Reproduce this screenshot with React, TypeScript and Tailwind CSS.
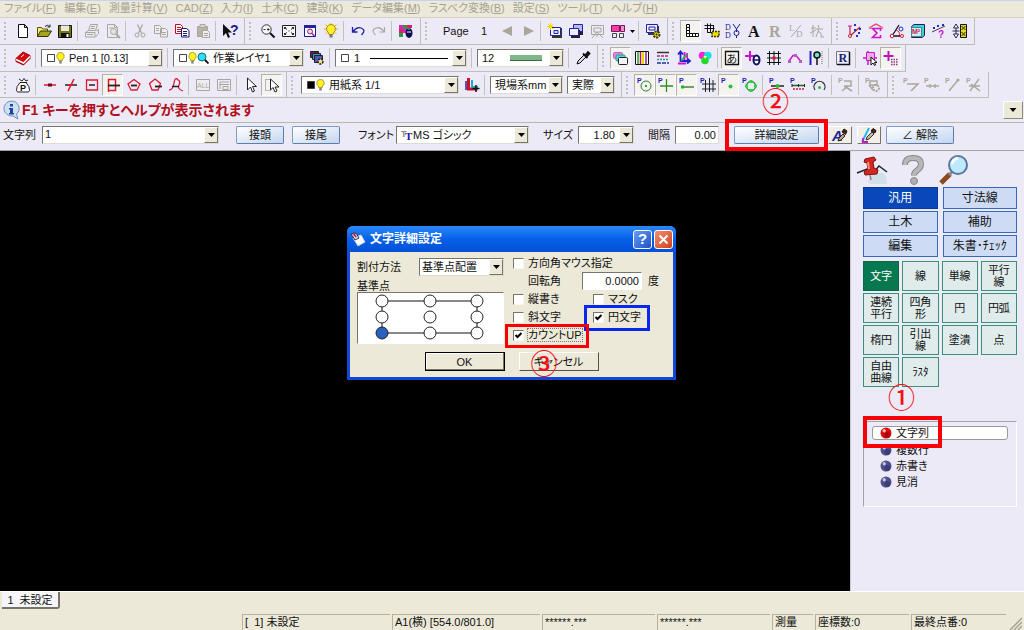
import type { ReactNode } from "react";

const G = "#aaa79a"; // disabled icon colour
const M = "#d010d0";

function PMark({ color = "#1c1cc0" }: { color?: string }) {
  return (
    <text x="0" y="6" fontSize="7" fontWeight="bold" fill={color}>
      P
    </text>
  );
}

// all glyphs are drawn on a 16x16 grid
const icons: Record<string, ReactNode> = {
  new: <path d="M3.5 1.5h6l3 3v10h-9zM9.5 1.5v3h3" fill="#fff" stroke="#111" />,
  open: (
    <>
      <path d="M1.5 13.5v-9h4l1 1.5h5v2" fill="#f4ee70" stroke="#55530a" />
      <path d="M1.5 13.5 4.500 8h11l-3.500 5.500z" fill="#a8a420" stroke="#33320a" />
      <path d="M9 3.500q2.500-2.500 4.500 0M14 1.500v2.500h-2.500" fill="none" stroke="#222" />
    </>
  ),
  save: (
    <>
      <path d="M1.500 2.500h13v12h-13z" fill="#77760e" stroke="#111" />
      <path d="M4 2.500h8v5.500H4z" fill="#e8e8e0" />
      <path d="M4 10h8.500v4.500H4z" fill="#111" />
      <path d="M9.500 11h2v3h-2z" fill="#fff" />
    </>
  ),
  print: (
    <path d="M4.500 7.500 6.500 1.500h7l-2 6M1.500 9.500l3-2h8l2-1v4l-3 3.500h-10zM1.500 9.500h9.500v4M3 11.500h6M7 3.500h4M6.500 5.500h4" fill="none" stroke={G} />
  ),
  preview: (
    <>
      <path d="M2.500 1.500h7l3 3v10h-10zM9.500 1.500v3h3M4.500 5h4" fill="none" stroke={G} />
      <circle cx="8.500" cy="8.500" r="3" fill="#e4e2e0" stroke={G} />
      <path d="m11 11 4 4" stroke={G} strokeWidth="2" />
    </>
  ),
  cut: (
    <>
      <path d="M5.500 1.500 9.500 10M10.500 1.500 6.500 10" stroke={G} fill="none" strokeWidth="1.300" />
      <circle cx="5" cy="12" r="2" fill="none" stroke={G} />
      <circle cx="11" cy="12" r="2" fill="none" stroke={G} />
    </>
  ),
  copy: (
    <path d="M1.500 2.500h5l2 2v6h-7zM7.500 5.500h5l2 2v6.500h-7zM3 5.500h3M3 7.500h3M9 9.500h4M9 11.500h4" fill="#efedf2" stroke={G} />
  ),
  copyRed: (
    <>
      <path d="M1.500 1.500h5l2 2v7h-7zM3 4.500h4M3 6.500h4M3 8.500h4" fill="#fff" stroke="#c01020" />
      <path d="M7.500 5.500h5l2.500 2v6.500h-7.500zM9 8.500h4M9 10.500h4M9 12.500h4" fill="#fff" stroke="#151a70" />
    </>
  ),
  paste: (
    <>
      <path d="M2.500 3.500h10v10h-10z" fill="#b5b2a8" stroke={G} />
      <path d="M5 1.500h5v3H5z" fill="#d8d6d0" stroke={G} />
      <path d="M7.500 7.500h5l2 2v5h-7zM9 10.500h4M9 12.500h4" fill="#efedf2" stroke={G} />
    </>
  ),
  help: (
    <>
      <path d="M1 1v12l3-3 2 5 2-1-2-4.500h4z" fill="#111" />
      <text x="8" y="12" fontSize="14" fontWeight="bold" fill="#1a1a90">?</text>
    </>
  ),
  zoom: (
    <>
      <circle cx="6.500" cy="6.500" r="4.700" fill="#f4f4fa" stroke="#333" />
      <path d="M3.500 6.500h2M7 6.500h2.500M8.200 5.200v2.600" stroke="#333" />
      <path d="m10 10 4.500 4.500" stroke="#111" strokeWidth="2" />
    </>
  ),
  fit: (
    <>
      <path d="M1.500 2.500h13v11h-13z" fill="#f6f6f6" stroke="#222" />
      <path d="m3.500 4.500 2.500 2M12.500 4.500l-2.500 2M3.500 11.500l2.500-2M12.500 11.500l-2.500-2M3.500 6v-1.500H5M11 4.500h1.500V6M3.500 10v1.500H5M11 11.500h1.500V10" fill="none" stroke="#222" />
      <path d="M7.500 7.500h1v1h-1z" fill="#222" />
    </>
  ),
  winZoom: (
    <>
      <path d="M2.500 2.500h11v11h-11z" fill="#fff" stroke="#1c1c80" />
      <path d="M2 2h12v3H2z" fill="#23239a" />
      <circle cx="8" cy="8.500" r="2.500" fill="#f6d0f0" stroke="#902090" />
      <path d="m10 10.500 2.500 2.500" stroke="#902090" strokeWidth="1.500" />
    </>
  ),
  bulb: (
    <>
      <path d="M8 0v2M1 6h2M13 6h2M2.500 1.500 4 3M13.500 1.500 12 3M2.500 11 4 9.500M13.500 11 12 9.500" stroke="#d8b800" />
      <path d="M8 1.500a4.500 4.500 0 0 0-2.800 8l.8 2h4l.8-2A4.500 4.500 0 0 0 8 1.500z" fill="#ffee28" stroke="#a89000" />
      <path d="M6.500 11.500h3v3h-3z" fill="#777" />
    </>
  ),
  undo: <path d="M2.500 4v5h5M3 8.500q4-5 8-3.500t2.500 4.500l-2 2.500" fill="none" stroke="#20209a" strokeWidth="1.300" />,
  redo: <path d="M13.500 4v5h-5M13 8.500q-4-5-8-3.500t-2.500 4.500l2 2.500" fill="none" stroke={G} strokeWidth="1.200" />,
  palette: (
    <>
      <path d="M1 2h4v4H1zM5 6h4v4H5z" fill="#e020d0" />
      <path d="M5 2h4v4H5zM1 10h4v4H1z" fill="#20a030" />
      <path d="M1 6h4v4H1zM9 2h5v3H9z" fill="#e02060" />
      <ellipse cx="11" cy="10" rx="3.500" ry="5" fill="#101050" />
      <path d="M9 9h4" stroke="#fff" />
      <path d="M11 5v2" stroke="#30d0e0" />
    </>
  ),
  prev: <path d="M13 3v10L3 8z" fill={G} />,
  next: <path d="M4 3v10l10-5z" fill={G} />,
  pageNew: (
    <>
      <path d="M5 5h10v10H5z" fill="#333a20" />
      <path d="M3.500 4.500h10v8h-10z" fill="#f4f4f8" stroke="#2222b0" />
      <path d="M7 7.500h4v3H7z" fill="#dde" stroke="#2222b0" />
      <path d="M3.500 0v7M0 3.500h7M1 1l5 5M6 1 1 6" stroke="#f0d800" />
    </>
  ),
  pageCopy: (
    <>
      <path d="M7 3h8v9H7z" fill="#223" />
      <path d="M5.500 1.500h9v7h-9z" fill="#b8b8e8" stroke="#2222a0" />
      <path d="M3 7h9v8H3z" fill="#223" />
      <path d="M1.500 5.500h9v7h-9z" fill="#eef" stroke="#2222a0" />
    </>
  ),
  pageDel: <path d="M2.500 2.500h12v9h-12zM5 5h7v4H5zM8 9l-5 6M8 9l6 6M8 11v3" fill="none" stroke={G} />,
  pageGrid: (
    <>
      <path d="M1.500 2.500h8v6h-8z" fill="#f040a0" stroke="#801060" />
      <path d="M10.500 2.500h4v6h-4z" fill="#f490c8" stroke="#801060" />
      <path d="M2.500 10.500h4v4h-4zM9.500 10.500h4v4h-4z" fill="#eee" stroke="#444" />
    </>
  ),
  pageGear: (
    <>
      <path d="M3 3h11v9H3z" fill="#333a40" />
      <path d="M1.500 1.500h11v8h-11z" fill="#eef" stroke="#2222a0" />
      <path d="M4 4h6v3H4z" fill="none" stroke="#2222a0" />
      <circle cx="11.500" cy="11.500" r="3" fill="#f0e000" stroke="#33320a" strokeDasharray="2 1" strokeWidth="2" />
      <circle cx="11.500" cy="11.500" r="1" fill="#222" />
    </>
  ),
  ruler: (
    <path d="M3.500 1.500h3v9h9v3h-12zM3.500 4.500h3M3.500 7.500h3M3.500 10.500h3v3M9.500 10.500v3M12.500 10.500v3" fill="#fff" stroke="#111" />
  ),
  rulerSet: (
    <>
      <path d="M3.500.5v9h8M6.500.5v9M9.500 2v8M.500 2.500h9M.500 5.500h10M3.500 9.500h6" fill="none" stroke="#111" />
      <path d="M8 8.500h7v5H8z" fill="#f0e000" stroke="#33320a" strokeDasharray="2 1" strokeWidth="1.500" />
    </>
  ),
  ddy: (
    <>
      <text x="0" y="7" fontSize="8" fill="#1c1c90" fontFamily="Liberation Serif">D</text>
      <text x="0" y="15" fontSize="8" fill="#1c1c90" fontFamily="Liberation Serif">D</text>
      <path d="m8 1 3.500 5L15 1M11.500 6v3" fill="none" stroke="#1c1c90" />
      <circle cx="11.500" cy="10" r="2.500" fill="none" stroke="#1c1c90" />
      <path d="M11.500 12.500V15" stroke="#1c1c90" />
    </>
  ),
  bigA: <text x="2" y="14" fontSize="16" fontWeight="bold" fill="#111" fontFamily="Liberation Serif">A</text>,
  bigR: <text x="2" y="14" fontSize="16" fontWeight="bold" fill={G} fontFamily="Liberation Serif">R</text>,
  ld: (
    <>
      <text x="1" y="8" fontSize="9" fill={G} fontFamily="Liberation Serif">L</text>
      <text x="8" y="14" fontSize="9" fill={G} fontFamily="Liberation Serif">D</text>
      <path d="M3 14 13 2" stroke={G} />
    </>
  ),
  walk: <path d="M4 2v12M2 5h5M9 2l1 3M7 6h7M10 6 7 14M9 9q4-1 3 5h3M1 10l6-3" fill="none" stroke={G} />,
  plot: (
    <>
      <path d="M3 3v11M3 13 13 4" stroke="#c02030" fill="none" strokeWidth="1.200" />
      <path d="M1 3h4" stroke={M} />
      <circle cx="3" cy="13" r="1.500" fill="#fff" stroke="#c02030" />
      <path d="M7 1h2v2H7zM11 9h2v2h-2zM9 12h2v2H9zM12 5h2v2h-2zM7 6h2v2H7z" fill="#2030c0" />
    </>
  ),
  sigma: (
    <>
      <path d="m1 5 7-4 7 4" fill="none" stroke="#e04060" strokeWidth="1.200" />
      <circle cx="2" cy="5" r="1.300" fill="#f08090" />
      <circle cx="14" cy="5" r="1.300" fill="#f08090" />
      <path d="M12.500 8V5.500h-8L9 10l-4.500 4.500h8V12" fill="none" stroke={M} strokeWidth="1.600" />
    </>
  ),
  angle: (
    <>
      <path d="M10 2 3 13h11" fill="none" stroke="#111" strokeWidth="1.300" />
      <path d="M7 7q4 1 3.500 6" fill="none" stroke="#e02030" />
      <circle cx="3" cy="13" r="1.800" fill="#fff" stroke="#c02030" />
      <circle cx="13" cy="13" r="1.500" fill="#fff" stroke="#c02030" />
      <circle cx="12" cy="6" r="2" fill="none" stroke="#2030c0" />
    </>
  ),
  area: (
    <>
      <path d="M1.500 3.500 4 1.500h10.500v11l-2.500 2h-10.500z" fill="#40d0d8" stroke="#225" />
      <path d="M1.500 4.500h10v9h-10z" fill="#c8f0f0" stroke="#488" />
      <text x="2" y="11" fontSize="7" fontWeight="bold" fill="#d01060">M²</text>
    </>
  ),
  ptQ: (
    <>
      <path d="M1 9 14 3" stroke="#444" />
      <path d="M2 4h2v2H2zM6 2h2v2H6zM11 1h2v2h-2z" fill="#2030c0" />
      <text x="7" y="15" fontSize="10" fontWeight="bold" fill={M}>?</text>
    </>
  ),
  plusBox: (
    <>
      <path d="M4 1 1.500 5h5zM4 15 1.500 11h5zM4 5v6M.500 8h7" fill="#fff" stroke="#222850" />
      <path d="M8.500 1.500h6v13h-6z" fill="#e8dc20" stroke="#111" />
      <path d="m9.500 3 4 4M13.500 3l-4 4M9.500 9l4 4M13.500 9l-4 4" stroke="#222" />
    </>
  ),
  eraser: (
    <>
      <path d="M1 8.500 8 2l7 3.500v3L8.500 15 1 11.500z" fill="#d80810" stroke="#900" />
      <path d="m1 9.500 7.500 3.500L15 6.500" fill="none" stroke="#fff" strokeWidth="1.500" />
      <path d="m6 7 3-2.500" stroke="#fff" />
    </>
  ),
  layerStack: (
    <>
      <path d="M1.500 1.500h8v6h-8z" fill="#6a1a70" stroke="#222" />
      <path d="M3.500 3.500h8v6h-8z" fill="#28a8a0" stroke="#222" />
      <path d="M5.500 5.500h8v7h-8z" fill="#5058c0" stroke="#222" />
      <circle cx="11.500" cy="11.500" r="2.500" fill="#f0e080" stroke="#222" strokeDasharray="2 1" strokeWidth="1.500" />
    </>
  ),
  dropper: (
    <>
      <path d="m2 14 1-3 6-6 2 2-6 6z" fill="#d8d8e0" stroke="#111" />
      <path d="m8 3.500 4.500 4.500M10 5.500 13 2l1.500 1.500-3 3.500z" fill="#111" stroke="#111" strokeWidth="1.800" />
    </>
  ),
  windows: (
    <>
      <rect x=".5" y="2.500" width="9" height="6" rx="1" fill="#f080e0" stroke="#c060c0" />
      <rect x="3" y="5" width="9" height="6" rx="1" fill="#50d8d0" stroke="#20a0a0" />
      <rect x="5.500" y="7.500" width="9" height="7" rx="1" fill="#f4f4f4" stroke="#222" />
    </>
  ),
  colors: (
    <>
      <path d="M1.500 1.500h13v13h-13z" fill="#fff" stroke="#111" />
      <path d="M4 2v12" stroke="#20a030" strokeWidth="1.500" />
      <path d="M6.500 2v12" stroke="#c01050" strokeWidth="1.500" />
      <path d="M9 2v12" stroke="#e8d800" strokeWidth="2" />
      <path d="M12 2v12" stroke="#901890" strokeWidth="1.500" />
    </>
  ),
  lines: (
    <>
      <path d="M2 2.500h12" stroke="#333" strokeWidth="1.500" />
      <path d="M2 6h12" stroke="#c02080" strokeDasharray="3 1" strokeWidth="1.500" />
      <path d="M2 9.500h12" stroke="#20a090" strokeDasharray="2 1" strokeWidth="1.500" />
      <path d="M2 13h12" stroke="#2030a0" strokeDasharray="4 1" strokeWidth="1.500" />
    </>
  ),
  axes: (
    <>
      <path d="M4.500 2v9h9M2 4.500l2.500-3 2.500 3M11 8.500l3 2.500-3 2.500" fill="none" stroke="#2020d0" strokeWidth="1.800" />
      <path d="M8.500 2v8M11 3v5M2 13.500h8" fill="none" stroke={M} strokeWidth="1.800" />
      <path d="m5 11 6-7" stroke="#20b040" strokeWidth="1.500" />
    </>
  ),
  rgb: (
    <>
      <circle cx="5.500" cy="5.500" r="3.800" fill="#ff20d8" />
      <circle cx="10.800" cy="5.500" r="3.800" fill="#18e0e0" />
      <circle cx="8" cy="10.500" r="3.800" fill="#28d828" />
      <path d="M6.500 6h3.500L8.200 9z" fill="#fff8a0" />
    </>
  ),
  kana: (
    <>
      <path d="M1.500 1.500h13v13h-13z" fill="#f8f8f8" stroke="#111" strokeWidth="1.300" />
      <text x="2.500" y="12.500" fontSize="11" fill="#111">あ</text>
    </>
  ),
  plusTheta: (
    <>
      <path d="M5 1v10M0 6h10" stroke={M} strokeWidth="2" />
      <ellipse cx="11.500" cy="10" rx="3" ry="4.500" fill="#fff" stroke="#101060" strokeWidth="2" />
      <path d="M9 10h5" stroke="#101060" strokeWidth="1.500" />
    </>
  ),
  grid: (
    <>
      <path d="M3.500 1v14M8 1v14M12.500 1v14M1 3.500h14M1 8h14M1 12.500h14" stroke="#111" />
      <path d="M6.500 6.500h3v3h-3z" fill="#e01020" />
    </>
  ),
  curve: (
    <>
      <path d="M2 11 6 5.500h3l5 6" fill="none" stroke={M} strokeWidth="1.500" />
      <path d="M1 10h3v3H1zM12 10h3v3h-3zM7 4h3v3H7z" fill="#b060c0" />
    </>
  ),
  pin: (
    <>
      <path d="M2.500 1v14" stroke="#2020c0" strokeWidth="2" />
      <path d="M9 6v9" stroke="#111" strokeWidth="1.500" />
      <circle cx="9" cy="5" r="3" fill="#70e0d0" stroke="#111" strokeWidth="1.500" />
      <path d="M14 1v14" stroke="#777" strokeDasharray="1 1" />
    </>
  ),
  boxR: (
    <>
      <path d="M1.500 1.500h13v13h-13z" fill="#eef" stroke="#777" />
      <path d="M14.500 2v12.500H2" stroke="#111" strokeWidth="1.500" fill="none" />
      <text x="3.500" y="12" fontSize="12" fontWeight="bold" fill="#1a2070" fontFamily="Liberation Serif">R</text>
    </>
  ),
  crossSel: (
    <>
      <path d="M6 1v14M1 8h14" stroke={M} strokeWidth="1.500" />
      <path d="M4.500 2.500h8v8h-8z" fill="#f0a8e8" stroke={M} />
      <path d="M9 7v8l2-2 1.500 2.500 1-.5-1-2.500h2.500z" fill="#fff" stroke="#111" />
    </>
  ),
  crossDots: (
    <>
      <path d="M5.500 1v10M.500 6h10" stroke="#b818b8" strokeWidth="2" />
      <path d="M8 9.500h7M8 12h7M8 14.500h7" stroke="#903890" strokeDasharray="1.500 1" strokeWidth="1.300" />
    </>
  ),
  bagP: (
    <>
      <path d="M5 5.500q-4 4-3.500 8l1 1.500h11l1-1.500q.5-4-3.500-8zM4 2l3 2 2-2.500L11 4l2-1M5 5.500h7" fill="#fff" stroke="#222" />
      <text x="5" y="13.500" fontSize="9" fontWeight="bold" fill="#111">P</text>
    </>
  ),
  snapDot: (
    <>
      <path d="M2 8h12" stroke="#e01830" strokeWidth="1.500" />
      <path d="M6 8h4" stroke="#700818" strokeWidth="3" />
    </>
  ),
  snapCross: (
    <>
      <path d="M5 14 11 2" stroke="#e01830" strokeWidth="1.500" />
      <path d="M2 8h12" stroke="#222" strokeWidth="1.500" />
      <path d="M5 8h5" stroke="#e01830" strokeWidth="2" />
    </>
  ),
  snapBox: (
    <>
      <path d="M2.500 3h11v10h-11z" fill="none" stroke="#e01830" strokeWidth="1.300" />
      <path d="M5 8h6" stroke="#222" strokeWidth="1.500" />
    </>
  ),
  snapFlag: (
    <>
      <path d="M3.500 15V2.500h7v11h-7" fill="none" stroke="#e01830" strokeWidth="1.500" />
      <path d="M3 8.500h12" stroke="#222" strokeWidth="1.800" />
    </>
  ),
  snapPoly: (
    <>
      <path d="m8 2.500 6 4.500-3 6H5L2 7z" fill="none" stroke="#e01830" strokeWidth="1.300" />
      <path d="M5 8.500h6" stroke="#222" strokeWidth="1.800" />
    </>
  ),
  snapHouse: (
    <>
      <path d="m8 2 5.500 4.500-2.500 6.500H5L2.500 6.500z" fill="none" stroke="#e01830" strokeWidth="1.300" />
      <path d="M8 9.500h7" stroke="#222" strokeWidth="1.800" />
    </>
  ),
  snapCurve: (
    <>
      <path d="M1 13Q5 13 6 6t4-3q3 1 1 5t4 6" fill="none" stroke="#e01830" strokeWidth="1.300" />
      <path d="M4 9.500h7" stroke="#222" strokeWidth="1.500" />
    </>
  ),
  all: (
    <>
      <path d="M1.500 2.500h13v11h-13z" fill="#efedf2" stroke={G} />
      <text x="2" y="11" fontSize="7" fill={G}>ALL</text>
    </>
  ),
  allSub: <path d="M1.500 2.500h13v11h-13zM4 5h9M4 7.500h9M4 5v7M7 9.500h5v3H7z" fill="none" stroke={G} />,
  arrow: <path d="M4.500 1v12l3-3 2 5 2-1-2-4.500h4z" fill="#fff" stroke="#222" />,
  arrowSel: (
    <>
      <path d="M1.500 2.500h5v11h-5z" fill="none" stroke="#777" strokeDasharray="1 1" />
      <path d="M6.500 2v11l2.500-2.500 2 4.500 2-1-2-4h4z" fill="#fff" stroke="#222" />
    </>
  ),
  axesPlus: (
    <>
      <path d="M4.500 1v11h9" fill="none" stroke="#d01020" strokeWidth="3" />
      <path d="M8 3v7h6" fill="none" stroke="#18b0c8" strokeWidth="2" />
      <path d="M2 4v9" stroke="#2020a0" strokeWidth="1.500" />
      <path d="M12 8v7M8.500 11.500h7" stroke="#111" strokeWidth="1.500" />
    </>
  ),
  pCircle: (
    <>
      <PMark />
      <circle cx="9" cy="9" r="5" fill="none" stroke="#3a7a3a" />
      <path d="M8 8h2v2H8z" fill="#10c020" />
    </>
  ),
  pCross: (
    <>
      <PMark />
      <path d="M8.500 2v13M2 9h13" stroke="#2a902a" strokeWidth="1.300" />
    </>
  ),
  pLine: (
    <>
      <PMark />
      <path d="M2 10h13" stroke="#2a702a" strokeWidth="1.300" />
      <path d="M2 8.500h3v3H2z" fill="#10c020" />
    </>
  ),
  pGrid: (
    <>
      <path d="M5.500 3v12M9.500 1v14M13 3v12M2 7h14M2 12h14" stroke="#222" />
      <PMark />
    </>
  ),
  pDot: (
    <>
      <PMark />
      <circle cx="9.500" cy="9.500" r="2" fill="#28c030" />
    </>
  ),
  pRing: (
    <>
      <PMark />
      <circle cx="9" cy="9" r="4.500" fill="none" stroke="#2a902a" strokeWidth="1.300" />
      <path d="M7.500 3h3v3h-3zM7.500 12h3v3h-3zM3 7.500h3v3H3zM12 7.500h3v3h-3z" fill="#28d838" />
    </>
  ),
  pMid: (
    <>
      <PMark />
      <path d="M2 9h13" stroke="#222" strokeWidth="1.500" />
      <circle cx="8.500" cy="9" r="2" fill="#20c030" />
    </>
  ),
  pDiv: (
    <>
      <PMark />
      <path d="M2 8.500h13" stroke="#2a602a" strokeWidth="1.500" />
      <path d="M3 12h12" stroke="#c02030" strokeDasharray="2 1" strokeWidth="1.500" />
      <path d="M2 7v3M8.500 7v3M14.500 7v3" stroke="#222" />
    </>
  ),
  pArc: (
    <>
      <PMark />
      <path d="M4 13a5.500 5.500 0 1 1 9 0" fill="none" stroke="#333" strokeWidth="1.300" />
      <circle cx="8.500" cy="10.500" r="1.500" fill="#20c030" />
    </>
  ),
  pGrayR: (
    <>
      <PMark color={G} />
      <path d="M6 4h7v5H6M6 9l8 5M10 9l-6 5" fill="none" stroke={G} strokeWidth="1.500" />
    </>
  ),
  pGrayGear: (
    <>
      <PMark color={G} />
      <path d="M5 4h7v4H5zM4 8l4 5" fill="none" stroke={G} strokeWidth="1.500" />
      <circle cx="11" cy="11" r="3" fill="none" stroke={G} strokeDasharray="2 1" strokeWidth="2" />
    </>
  ),
  pGrayA: (
    <>
      <PMark color={G} />
      <path d="M4 7h11L8 14" fill="none" stroke={G} strokeWidth="1.500" />
    </>
  ),
  pGrayB: (
    <>
      <PMark color={G} />
      <path d="M2 9h13M6 7v4M11 7v4" fill="none" stroke={G} strokeWidth="1.300" />
    </>
  ),
  pGrayC: (
    <>
      <PMark color={G} />
      <path d="M4 14 13 3" stroke={G} strokeWidth="1.500" />
      <circle cx="13" cy="3" r="1.500" fill={G} />
    </>
  ),
  pGrayD: (
    <>
      <PMark color={G} />
      <path d="m4 14 9-12M5 7l9 7M3 9h11" stroke={G} strokeWidth="1.400" />
    </>
  ),
  fontPick: (
    <>
      <text x="0" y="14" fontSize="15" fontWeight="bold" fontStyle="italic" fill="#1a2a98">A</text>
      <path d="m6 14 1-3 4-4 2 2-4 4z" fill="#c8a080" stroke="#222" />
      <path d="m10 5 2-3 3 2-1.500 3.500z" fill="#422" stroke="#211" />
    </>
  ),
  linePick: (
    <>
      <path d="M8 1 1 15" stroke="#18b8f0" strokeWidth="1.800" />
      <path d="M2 11v4h5" fill="none" stroke={M} strokeWidth="1.800" />
      <path d="m5 13 1-3 5-5 2 2-5 5z" fill="#c8b8a8" stroke="#333" />
      <path d="m10 4 2-2.500 3 2L14 6z" fill="#422" stroke="#211" />
    </>
  ),
};

const SEP = "|";

function Icon({ name, className = "size-4" }: { name: string; className?: string }) {
  return (
    <svg viewBox="0 0 16 16" className={`${className} overflow-visible`} aria-hidden="true">
      {icons[name]}
    </svg>
  );
}

function Sep() {
  return <span className="ml-0.5 mr-[3px] h-5 w-px shrink-0 bg-[#c4c1b8]" />;
}

/* names ending with "*" are drawn pressed */
function Tools({ items }: { items: string[] }) {
  return (
    <>
      {items.map((item, i) => {
        if (item === SEP) return <Sep key={i} />;
        const pressed = item.endsWith("*");
        const name = pressed ? item.slice(0, -1) : item;
        return (
          <button
            key={i}
            type="button"
            aria-label={name}
            aria-pressed={pressed}
            className={
              pressed
                ? "flex h-[22px] w-[21px] shrink-0 items-center justify-center border border-t-[#b5b2a4] border-l-[#b5b2a4] border-r-white border-b-white bg-[#f5f3ef]"
                : "flex h-[22px] w-[21px] shrink-0 items-center justify-center"
            }
          >
            <Icon name={name} />
          </button>
        );
      })}
    </>
  );
}

function Group({ children }: { children: ReactNode }) {
  return (
    <div className="flex h-full shrink-0 items-center border-r border-b border-[#c0bdb4] pr-1">
      <span className="mx-1 h-[18px] w-1 shrink-0 border-l-2 border-dotted border-[#c4c1bc]" />
      {children}
    </div>
  );
}

function Arrow() {
  return (
    <span className="pointer-events-none flex w-[14px] shrink-0 items-center justify-center border border-t-white border-l-white border-r-[#77746a] border-b-[#77746a] bg-[#ece9d8]">
      <svg viewBox="0 0 7 4" className="h-1 w-[7px]" aria-hidden="true">
        <path d="M0 0h7L3.500 4z" fill="#000" />
      </svg>
    </span>
  );
}

function Combo({
  label,
  value,
  width,
  before,
  after,
  selectClass = "flex-1",
}: {
  label: string;
  value: string;
  width: string;
  before?: ReactNode;
  after?: ReactNode;
  selectClass?: string;
}) {
  return (
    <div
      className={`${width} mx-0.5 flex h-[18px] shrink-0 border border-t-[#77746a] border-l-[#77746a] border-r-[#dedbd0] border-b-[#dedbd0] bg-white pl-1`}
    >
      {before && <span className="flex shrink-0 items-center pr-1">{before}</span>}
      <select aria-label={label} className={`${selectClass} min-w-0 appearance-none bg-transparent outline-none`}>
        <option>{value}</option>
      </select>
      {after && <span className="flex flex-1 items-center justify-center">{after}</span>}
      <Arrow />
    </div>
  );
}

function Swatch({ fill = "#fff" }: { fill?: string }) {
  return (
    <svg viewBox="0 0 10 10" className="size-[10px]" aria-hidden="true">
      <path d="M1.500 1.500h7v7h-7z" fill={fill} stroke="#444" />
    </svg>
  );
}

function Bulb() {
  return (
    <svg viewBox="0 0 10 14" className="h-3 w-[9px]" aria-hidden="true">
      <path d="M5 .5a4.300 4.300 0 0 0-2.500 7.800L3 10h4l.5-1.700A4.300 4.300 0 0 0 5 .5z" fill="#fff020" stroke="#a09010" />
      <path d="M3.500 10.500h3v3h-3z" fill="#888" />
    </svg>
  );
}

function Loupe() {
  return (
    <svg viewBox="0 0 12 12" className="size-3" aria-hidden="true">
      <circle cx="5" cy="5" r="4" fill="#30e0f0" stroke="#107080" />
      <path d="m8 8 3.500 3.500" stroke="#111" strokeWidth="1.800" />
    </svg>
  );
}

const menus = [
  ["ファイル", "F"],
  ["編集", "E"],
  ["測量計算", "V"],
  ["CAD", "Z"],
  ["入力", "I"],
  ["土木", "C"],
  ["建設", "K"],
  ["データ編集", "M"],
  ["ラスベク変換", "B"],
  ["設定", "S"],
  ["ツール", "T"],
  ["ヘルプ", "H"],
];

function MenuBar() {
  return (
    <nav className="flex h-[18px] shrink-0 items-center gap-2 border-t border-b border-t-[#c3d4f0] border-b-[#d5d2c4] bg-[#ece9d8] pl-1 text-[#a5a294]">
      {menus.map(([name, key]) => (
        <button key={key} type="button" className="shrink-0 pb-0.5">
          {name}(<u>{key}</u>)
        </button>
      ))}
    </nav>
  );
}

function Toolbars() {
  return (
    <div className="shrink-0">
      <div className="flex h-[27px]">
        <Group>
          <Tools items={["new", "open", "save", SEP, "print", "preview", SEP, "cut", "copy", "copyRed", "paste", SEP, "help"]} />
        </Group>
        <Group>
          <Tools items={["zoom", "fit", "winZoom", "bulb", SEP, "undo", "redo", SEP, "palette"]} />
        </Group>
        <Group>
          <span className="w-[63px] shrink-0 pl-2.5 whitespace-pre">Page{"    "}1</span>
          <Tools items={["prev", "next", SEP, "pageNew", "pageCopy", "pageDel", "pageGrid"]} />
          <button type="button" aria-label="page list" className="flex w-2 justify-center">
            <svg viewBox="0 0 5 3" className="h-[3px] w-[5px]" aria-hidden="true">
              <path d="M0 0h5L2.500 3z" />
            </svg>
          </button>
          <Tools items={[SEP, "pageGear"]} />
        </Group>
        <Group>
          <Tools items={["ruler*", "rulerSet", "ddy", "bigA", "bigR", "ld", "walk"]} />
        </Group>
        <Group>
          <Tools items={["plot", "sigma", "angle", "area", "ptQ", "plusBox"]} />
        </Group>
      </div>

      <div className="flex h-[27px]">
        <Group>
          <Tools items={["eraser", SEP]} />
          <Combo label="ペン" value="Pen 1   [0.13]" width="w-[122px]" before={<><Swatch /><Bulb /></>} />
          <Sep />
          <Combo label="レイヤ" value="作業レイヤ1" width="w-[131px]" before={<><Swatch /><Bulb /><Loupe /></>} />
          <Tools items={["layerStack", SEP]} />
          <Combo
            label="線種"
            value="1"
            width="w-[132px]"
            before={<Swatch />}
            selectClass="w-3"
            after={<span className="h-px w-[78px] bg-black" />}
          />
          <Sep />
          <Combo
            label="線幅"
            value="12"
            width="w-[87px]"
            selectClass="w-5"
            after={<span className="h-[6px] w-8 border-b border-[#3c6b44] bg-[#7fb888]" />}
          />
          <Tools items={[SEP, "dropper"]} />
        </Group>
        <Group>
          <Tools items={["windows*", "colors", "lines", "axes", "rgb", SEP, "kana*", "plusTheta", "grid", "curve", "pin", SEP, "boxR", SEP, "crossSel", "crossDots*"]} />
        </Group>
      </div>

      <div className="flex h-[26px]">
        <Group>
          <Tools items={["bagP", SEP, "snapDot", "snapCross", "snapBox", "snapFlag*", "snapPoly", "snapHouse", "snapCurve", SEP, "all", "allSub", SEP, "arrow", "arrowSel*"]} />
        </Group>
        <Group>
          <Combo label="用紙" value="用紙系 1/1" width="w-[158px]" before={<><Swatch fill="#000" /><Bulb /></>} />
          <Tools items={["axesPlus", SEP]} />
          <Combo label="座標系" value="現場系mm" width="w-[73px]" />
          <Combo label="表示" value="実際" width="w-[48px]" />
        </Group>
        <Group>
          <Tools items={["pCircle*", "pCross*", "pLine*", "pGrid", "pDot*", "pRing", SEP, "pMid", "pDiv", "pArc", SEP, "pGrayR", SEP, "pGrayGear"]} />
        </Group>
        <Group>
          <Tools items={["pGrayA", "pGrayB", "pGrayC", "pGrayD"]} />
        </Group>
      </div>
    </div>
  );
}

function MessageBar() {
  return (
    <div className="flex h-6 shrink-0 items-center pl-0.5">
      <svg viewBox="0 0 20 20" className="size-5 shrink-0" aria-hidden="true">
        <path d="M9 1a8 7.500 0 1 0 2 15l5 3-1.500-5A8 7.500 0 0 0 9 1z" fill="#cfe0f4" stroke="#7090b8" />
        <path d="M8 4h3v2.500H8zM7 8h4v5h1v1.500H7V13h1V9.500H7z" fill="#1848a0" />
      </svg>
      <p className="text-[14px] font-bold text-[#b01020]">F1 キーを押すとヘルプが表示されます</p>
      <button
        type="button"
        aria-label="履歴"
        className="mr-px ml-auto flex h-[18px] w-5 items-center justify-center border border-t-white border-l-white border-r-[#8d8a7d] border-b-[#8d8a7d] bg-[#ece9d8]"
      >
        <svg viewBox="0 0 7 4" className="h-1 w-2" aria-hidden="true">
          <path d="M0 0h7L3.500 4z" />
        </svg>
      </button>
    </div>
  );
}

function SoftButton({ children, width }: { children: ReactNode; width: string }) {
  return (
    <button
      type="button"
      className={`${width} h-[18px] shrink-0 rounded-[2px] border border-[#7f9bc4] border-r-[#5f7ba8] border-b-[#5f7ba8] bg-linear-to-br from-white to-[#c3d6f0]`}
    >
      {children}
    </button>
  );
}

function CircleMark({ children, className }: { children: string; className: string }) {
  return (
    <span className={`${className} pointer-events-none absolute z-20 text-[27px] leading-[27px] font-medium text-[#f01018]`}>
      {children}
    </span>
  );
}

function PropertyBar() {
  return (
    <div className="flex h-7 shrink-0 items-center border-t border-[#b9b6ae] pb-[3px] pl-[3px]">
      <label htmlFor="text-value" className="w-[39px] shrink-0">
        文字列
      </label>
      <div className="flex h-[18px] w-[177px] shrink-0 border border-t-[#77746a] border-l-[#77746a] border-r-[#dedbd0] border-b-[#dedbd0] bg-white">
        <input id="text-value" defaultValue="1" className="min-w-0 flex-1 pb-0.5 pl-0.5 outline-none" />
        <Arrow />
      </div>
      <div className="ml-[17px] flex shrink-0 gap-2">
        <SoftButton width="w-12">接頭</SoftButton>
        <SoftButton width="w-12">接尾</SoftButton>
      </div>
      <span className="ml-[18px] w-9 shrink-0">フォント</span>
      <Combo
        label="フォント"
        value="MS ゴシック"
        width="w-[133px]"
        before={
          <svg viewBox="0 0 12 12" className="-mr-1 size-3" aria-hidden="true">
            <text x="0" y="8" fontSize="9" fontWeight="bold" fill="#888">T</text>
            <text x="4" y="11" fontSize="11" fontWeight="bold" fill="#1c1c90" fontFamily="Liberation Serif">T</text>
          </svg>
        }
      />
      <span className="ml-3 w-[33px] shrink-0">サイズ</span>
      <Combo label="サイズ" value="1.80" width="w-[56px]" selectClass="flex-1 text-right pr-1" />
      <label htmlFor="spacing" className="ml-3 w-[27px] shrink-0">
        間隔
      </label>
      <input
        id="spacing"
        defaultValue="0.00"
        className="h-[18px] w-11 shrink-0 border border-t-[#77746a] border-l-[#77746a] border-r-[#dedbd0] border-b-[#dedbd0] bg-white pr-0.5 text-right outline-none"
      />
      <div className="relative ml-[15px] flex shrink-0">
        <SoftButton width="w-[85px]">詳細設定</SoftButton>
        <span className="pointer-events-none absolute -inset-x-[9px] -inset-y-[7px] z-10 border-4 border-[#f80008]" />
        <CircleMark className="-top-9 left-7">②</CircleMark>
      </div>
      <div className="ml-[9px] flex shrink-0 gap-[5px]">
        {["fontPick", "linePick"].map((name) => (
          <button
            key={name}
            type="button"
            aria-label={name}
            className="flex h-[18px] w-6 items-center justify-center border border-t-white border-l-white border-r-[#77746a] border-b-[#77746a] bg-[#f0eee6]"
          >
            <Icon name={name} />
          </button>
        ))}
        <SoftButton width="w-[68px]">∠ 解除</SoftButton>
      </div>
    </div>
  );
}

function Check({
  label,
  checked = false,
  focused = false,
}: {
  label: string;
  checked?: boolean;
  focused?: boolean;
}) {
  return (
    <label className="relative flex w-fit items-center gap-1">
      <input
        type="checkbox"
        defaultChecked={checked}
        className="peer size-[11px] shrink-0 appearance-none border border-t-[#77746a] border-l-[#77746a] border-r-[#f8f6ee] border-b-[#f8f6ee] bg-white"
      />
      <svg viewBox="0 0 11 11" className="pointer-events-none absolute left-0 hidden size-[11px] peer-checked:block" aria-hidden="true">
        <path d="m2.500 5 2 2 4-4" fill="none" stroke="#000" strokeWidth="2" />
      </svg>
      <span className={focused ? "leading-3 outline-1 outline-dotted outline-[#777]" : ""}>{label}</span>
    </label>
  );
}

function AnchorPicker() {
  const xs = [24, 72, 119];
  const ys = [8, 24, 40];
  return (
    <svg viewBox="0 0 145 50" className="h-[50px] w-[145px]" aria-label="基準点">
      <path d="M24 8h95M24 40h95M24 8v32M119 8v32" stroke="#111" fill="none" />
      {ys.map((y, r) =>
        xs.map((x, c) => (
          <circle key={`${r}${c}`} cx={x} cy={y} r="6" fill={r === 2 && c === 0 ? "#2860c0" : "#fff"} stroke="#222" />
        )),
      )}
    </svg>
  );
}

function Dialog() {
  return (
    <section
      aria-label="文字詳細設定"
      className="absolute top-[75px] left-[347px] w-[329px] rounded-t-md border-[3px] border-t-0 border-[#1248d8] bg-[#ece9d8]"
    >
      <header className="-mx-[3px] flex h-[26px] items-center rounded-t-md bg-linear-to-b from-[#2a88f8] via-[#0560e8] to-[#0550d8] px-[3px] text-white">
        <svg viewBox="0 0 16 16" className="size-4" aria-hidden="true">
          <path d="m3 7 8-3 4 7-7 4z" fill="#fff" stroke="#ccd" />
          <path d="m1 3 5-1 3 5-4 2z" fill="#d8d0e8" stroke="#335" />
          <path d="m3 2 3 4" stroke="#c02040" strokeWidth="1.500" />
        </svg>
        <h2 className="ml-1 flex-1 text-[12px] font-bold">文字詳細設定</h2>
        <button
          type="button"
          aria-label="ヘルプ"
          className="flex size-[19px] items-center justify-center rounded-[3px] border border-white bg-linear-to-br from-[#6a9cf4] to-[#1c50c8] text-[15px] font-bold"
        >
          ?
        </button>
        <button
          type="button"
          aria-label="閉じる"
          className="ml-0.5 flex size-[19px] items-center justify-center rounded-[3px] border border-white bg-linear-to-br from-[#f09070] to-[#d03c14]"
        >
          <svg viewBox="0 0 11 11" className="size-[11px]" aria-hidden="true">
            <path d="m1.500 1.500 8 8M9.500 1.500l-8 8" stroke="#fff" strokeWidth="2" />
          </svg>
        </button>
      </header>

      <div className="flex gap-[9px] pt-0.5 pl-[7px]">
        <div className="w-[147px] shrink-0">
          <div className="flex h-[26px] items-center">
            <span className="w-[60px] shrink-0">割付方法</span>
            <Combo label="割付方法" value="基準点配置" width="w-[85px]" selectClass="flex-1 -ml-0.5" />
          </div>
          <p className="h-3 leading-3">基準点</p>
          <div className="h-[52px] border border-t-[#77746a] border-l-[#77746a] border-r-white border-b-white bg-white">
            <AnchorPicker />
          </div>
        </div>

        <div className="grid flex-1 auto-rows-[18px] grid-cols-[80px_1fr] items-center">
          <div className="col-span-2">
            <Check label="方向角マウス指定" />
          </div>
          <label htmlFor="rotation" className="col-span-2 flex items-center pl-[15px]">
            <span className="w-[54px]">回転角</span>
            <input
              id="rotation"
              defaultValue="0.0000"
              className="h-[18px] w-[60px] border border-t-[#77746a] border-l-[#77746a] border-r-white border-b-white bg-white pr-0.5 text-right outline-none"
            />
            <span className="pl-1.5">度</span>
          </label>
          <Check label="縦書き" />
          <Check label="マスク" />
          <Check label="斜文字" />
          <div className="relative">
            <Check label="円文字" checked />
            <span className="pointer-events-none absolute -top-1 -left-[9px] h-[26px] w-[66px] border-[3px] border-[#0828f0]" />
          </div>
          <div className="relative">
            <Check label="カウントUP" checked focused />
            <span className="pointer-events-none absolute -top-[5px] -left-2 h-6 w-[84px] border-[3px] border-[#f80008]" />
          </div>
        </div>
      </div>

      <div className="flex justify-center gap-[14px] pt-2 pb-[6px]">
        <button
          type="button"
          className="h-[19px] w-20 border border-black bg-[#ece9d8] shadow-[inset_-1px_-1px_0_#77746a,inset_1px_1px_0_#fff]"
        >
          OK
        </button>
        <div className="relative flex">
          <button
            type="button"
            className="h-[19px] w-20 border border-t-white border-l-white border-r-[#55524a] border-b-[#55524a] bg-[#ece9d8]"
          >
            キャンセル
          </button>
          <CircleMark className="top-0 left-3">③</CircleMark>
        </div>
      </div>
    </section>
  );
}

const categories = ["汎用", "寸法線", "土木", "補助", "編集", "朱書･ﾁｪｯｸ"];
const shapes = ["文字", "線", "単線", "平行\n線", "連続\n平行", "四角\n形", "円", "円弧", "楕円", "引出\n線", "塗潰", "点", "自由\n曲線", "ﾗｽﾀ"];
const modes = ["文字列", "複数行", "赤書き", "見消"];

function Ball({ red }: { red: boolean }) {
  return (
    <svg viewBox="0 0 12 12" className="size-3" aria-hidden="true">
      <circle cx="6" cy="6" r="5.500" fill={red ? "#d80c10" : "#50508c"} />
      <circle cx="7.500" cy="8" r="3" fill={red ? "#b00008" : "#3c3c78"} />
      <circle cx="4.200" cy="3.800" r="1.700" fill={red ? "#ffb8a8" : "#c4c4e4"} />
    </svg>
  );
}

function SidePanel() {
  return (
    <aside className="w-[174px] shrink-0 border-l border-[#c9c6cc] pr-[7px] pl-3">
      <div className="flex h-9 items-center gap-[9px] pt-0.5">
        <svg viewBox="0 0 32 32" className="-ml-[7px] size-8" aria-hidden="true">
          <path d="M12 28q2-9 9-8 10-5 10 10H15z" fill="#cfe0e8" />
          <path d="M1 19 11 15l6 4 6-7 8 6" fill="none" stroke="#222" strokeWidth="1.500" />
          <path d="m9 5 9-2 2 3-3 2 1 6 4 2-1 4-12 1-1-3 4-3-1-6-3-1z" fill="#d02820" stroke="#801010" />
          <path d="m12 8 1 7" stroke="#ff9080" strokeWidth="2" />
          <path d="m14 21 1 5" stroke="#888" strokeWidth="1.500" />
        </svg>
        <svg viewBox="0 0 32 32" className="size-8" aria-hidden="true">
          <path d="M8 11q0-7 8-7t8 6q0 4-4 6.500-3 2-3 5" fill="none" stroke="#888" strokeWidth="6" />
          <path d="M8 11q0-7 8-7t8 6q0 4-4 6.500-3 2-3 5" fill="none" stroke="#b8b8b8" strokeWidth="4" />
          <circle cx="17" cy="27" r="3.500" fill="#b0b0b0" stroke="#888" />
        </svg>
        <svg viewBox="0 0 32 32" className="size-8" aria-hidden="true">
          <path d="m3 29 9-9" stroke="#8a4a20" strokeWidth="5" />
          <path d="m11 21 4-4" stroke="#889" strokeWidth="3" />
          <circle cx="20" cy="11" r="9" fill="#c0e8fc" stroke="#58789c" strokeWidth="2" />
          <path d="M14 10q1-5 6-6" fill="none" stroke="#fff" strokeWidth="2.500" />
        </svg>
      </div>

      <div className="grid auto-rows-[22px] grid-cols-2 gap-x-[5px] gap-y-0.5 text-[12px]">
        {categories.map((name, i) => (
          <button
            key={name}
            type="button"
            className={i === 0 ? "border border-[#0838a0] bg-[#0848b8] text-white" : "border border-[#3868b8] bg-[#cddcf4]"}
          >
            {name}
          </button>
        ))}
      </div>

      <div className="mt-1 grid auto-rows-[30px] grid-cols-4 gap-x-[3px] gap-y-0.5">
        {shapes.map((name, i) => (
          <button
            key={name}
            type="button"
            className={
              i === 0
                ? "border border-[#086848] bg-[#087850] leading-3 whitespace-pre-line text-white"
                : "border border-[#3c9078] bg-[#e0ecec] leading-3 whitespace-pre-line"
            }
          >
            {name}
          </button>
        ))}
      </div>

      <div className="relative mt-[34px] h-[86px] border-t border-l border-[#a5a2a8] border-r border-r-white border-b border-b-white pt-1 pl-2">
        {modes.map((name, i) => (
          <label
            key={name}
            className={
              i === 0
                ? "mr-2 mb-0.5 flex h-[14px] items-center gap-1 rounded-[3px] border border-[#999] bg-white pl-[7px]"
                : "flex h-4 items-center gap-1 pl-2"
            }
          >
            <input type="radio" name="mode" defaultChecked={i === 0} className="sr-only" />
            <Ball red={i === 0} />
            {name}
          </label>
        ))}
        <span className="pointer-events-none absolute -top-[6px] -left-px h-8 w-[79px] border-4 border-[#f80008]" />
        <CircleMark className="-top-9 left-6">①</CircleMark>
      </div>
    </aside>
  );
}

const status = [
  { text: "[  1] 未設定", width: "w-[148px]" },
  { text: "A1(横) [554.0/801.0]", width: "w-[148px]" },
  { text: "******.***", width: "w-[113px]" },
  { text: "******.***", width: "w-[113px]" },
  { text: "測量", width: "w-[41px]" },
  { text: "座標数:0", width: "w-[94px]" },
  { text: "最終点番:0", width: "w-[95px]" },
];

function BottomBar() {
  return (
    <footer className="shrink-0 border-t border-white bg-[#ece9d8]">
      <div className="flex h-[22px] items-start pl-0.5">
        <button
          type="button"
          className="h-[17px] w-[58px] rounded-br-[3px] border-r-2 border-b-2 border-[#77746a] bg-[#f6f5fa] whitespace-pre"
        >
          1  未設定
        </button>
      </div>
      <div className="flex h-4 items-center justify-end gap-0.5 pr-0.5">
        {status.map((cell, i) => (
          <span
            key={i}
            className={`${cell.width} h-4 shrink-0 border-t border-l border-[#b5b2a2] pl-0.5 leading-[15px] whitespace-pre`}
          >
            {cell.text}
          </span>
        ))}
        <svg viewBox="0 0 14 14" className="size-[14px] self-end" aria-hidden="true">
          <path d="M14 2 2 14M14 6l-8 8M14 10l-4 4" stroke="#a5a294" strokeWidth="1.500" />
        </svg>
      </div>
    </footer>
  );
}

export default function App() {
  return (
    <div className="flex min-h-screen flex-col overflow-hidden bg-[#edeaf7] font-['Liberation_Sans','Noto_Sans_CJK_JP',sans-serif] text-[11px] leading-4 text-[#111] [font-feature-settings:'palt']">
      <MenuBar />
      <Toolbars />
      <MessageBar />
      <PropertyBar />
      <main className="flex flex-1 border-t border-[#a5a2a0]">
        <div className="relative flex-1 bg-black">
          <Dialog />
        </div>
        <SidePanel />
      </main>
      <BottomBar />
    </div>
  );
}
